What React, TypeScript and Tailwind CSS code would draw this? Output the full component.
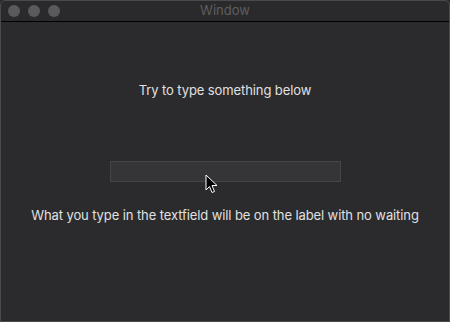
export default function App() {
  return (
    <div className="w-[450px] h-[322px] bg-[#2b2b2d] relative overflow-hidden" style={{ fontFamily: "Inter, 'Noto Sans', sans-serif" }}>
      <div className="h-[22px] bg-[#2a2a2c] border-b border-black flex items-center relative">
        <div className="flex gap-[8px] pl-[8px]">
          <div className="w-[12px] h-[12px] rounded-full bg-[#5a5a5c]" />
          <div className="w-[12px] h-[12px] rounded-full bg-[#5a5a5c]" />
          <div className="w-[12px] h-[12px] rounded-full bg-[#5a5a5c]" />
        </div>
        <div className="absolute inset-0 flex items-center justify-center text-[13px] text-[#5e5e60]">Window</div>
      </div>
      <div className="flex flex-col items-center">
        <div className="mt-[60px] text-[13px] text-[#e0e0e0] leading-[16px] tracking-[-0.1px]">Try to type something below</div>
        <div className="mt-[63px] w-[231px] h-[21px] bg-[#353537] border border-[#454547]" />
        <div className="mt-[25px] text-[13px] text-[#e0e0e0] leading-[16px] tracking-[-0.1px]">What you type in the textfield will be on the label with no waiting</div>
      </div>
      <svg className="absolute left-[205px] top-[174px]" width="13" height="20" viewBox="0 0 13 20">
        <path d="M1 1 L1 16 L4.5 12.5 L7 18.5 L9.5 17.5 L7 11.5 L12 11.5 Z" fill="#000" stroke="#fff" strokeWidth="1" strokeLinejoin="round" />
      </svg>
      <div className="absolute inset-0 rounded-t-[5px] border border-[#4a4a4c] pointer-events-none" />
    </div>
  );
}
